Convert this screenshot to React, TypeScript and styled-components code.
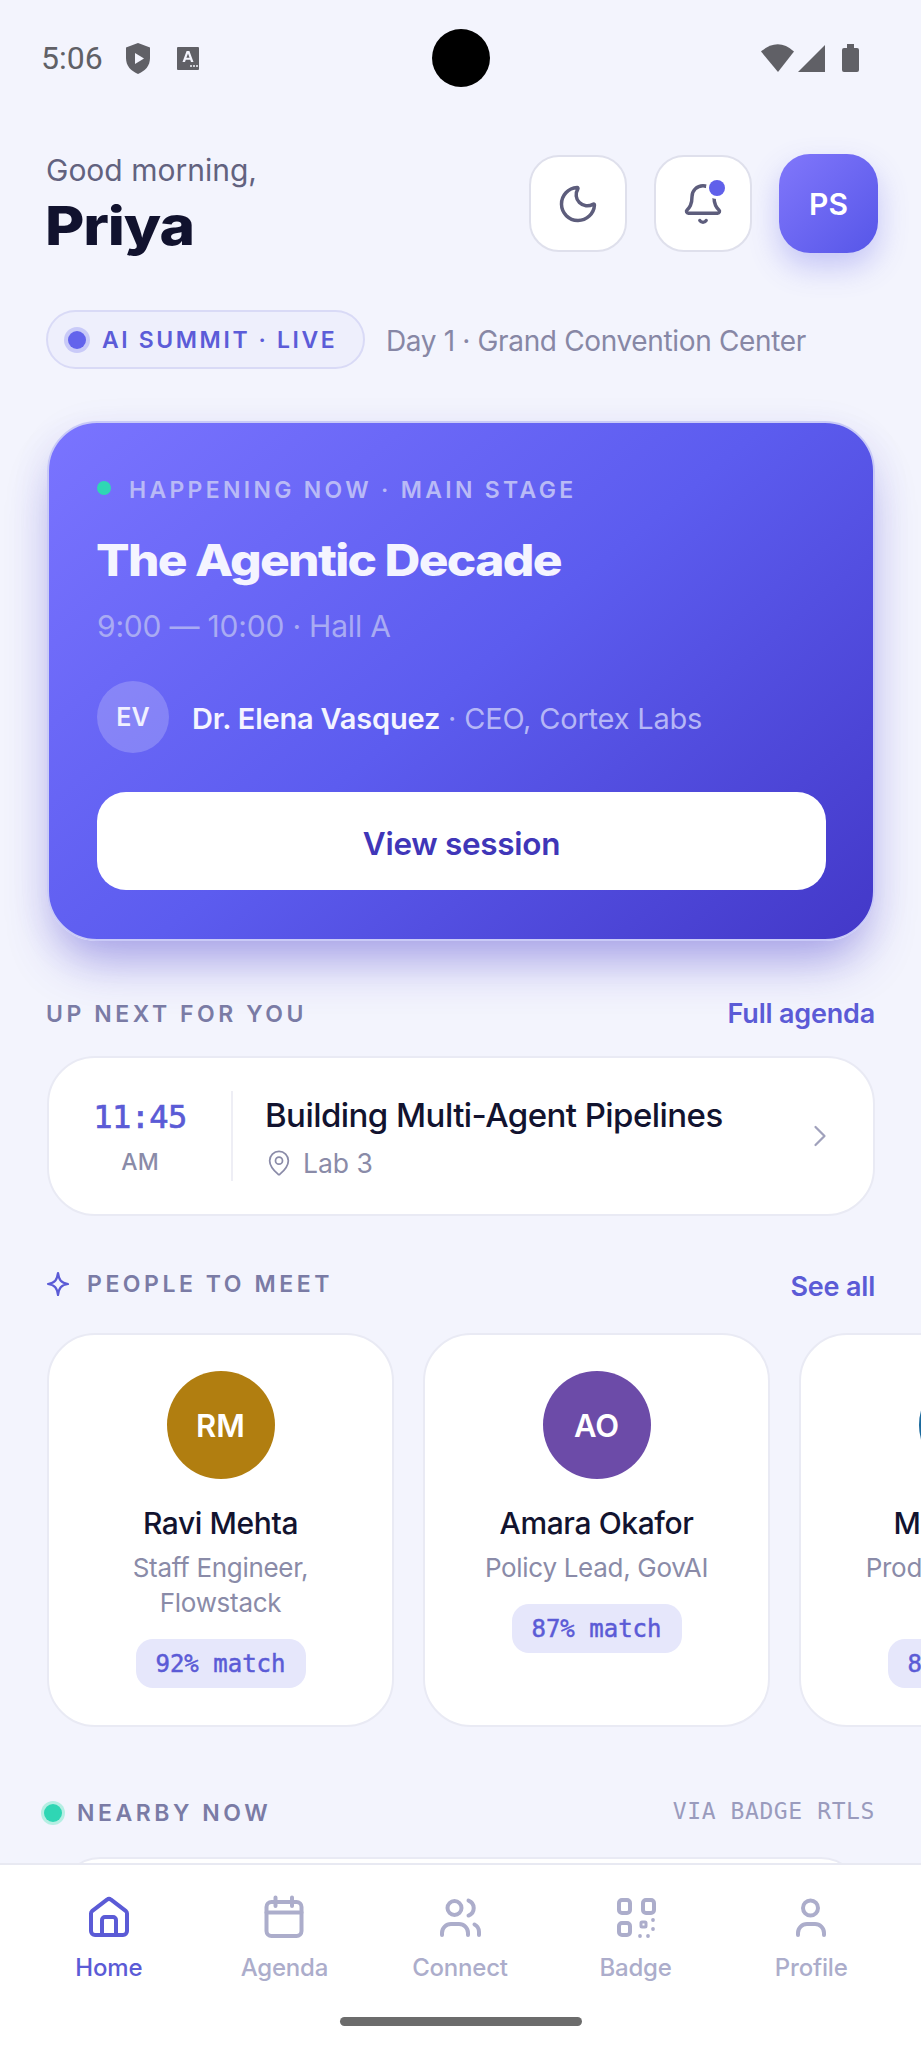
import React from "react";
import styled, { createGlobalStyle } from "styled-components";
import { Bell, ChevronRight, MapPin, Moon } from "lucide-react";

const Global = createGlobalStyle`
  html, body { margin: 0; padding: 0; background: #f3f4fd; }
  * { box-sizing: border-box; }
  body { font-family: Inter, "Liberation Sans", sans-serif; }
`;

const SANS = `Inter, "Liberation Sans", sans-serif`;
const MONO = `"DejaVu Sans Mono", "Liberation Mono", monospace`;

const Screen = styled.div`
  position: relative;
  width: 921px;
  height: 2048px;
  overflow: hidden;
  background: #f3f4fd;
`;

const StatusBar = styled.div`
  display: grid;
  grid-template-columns: 1fr 58px 1fr;
  align-items: center;
  height: 87px;
  padding: 29px 42px 0;
`;
const StatusLeft = styled.div`
  display: flex;
  align-items: center;
`;
const Clock = styled.span`
  font: 400 32px Roboto, sans-serif;
  color: #606066;
  width: 84px;
  margin-left: -1px;
  margin-right: 1px;
`;
const Camera = styled.div`
  width: 58px;
  height: 58px;
  border-radius: 50%;
  background: #000;
`;
const StatusRight = styled.div`
  display: flex;
  align-items: center;
  justify-content: flex-end;
  margin-right: 19px;
`;
const InputGlyph = styled.svg`
  margin-left: 27px;
`;

const Body = styled.div`
  padding: 67px 46px 0;
`;

const Header = styled.header`
  display: flex;
  justify-content: space-between;
  align-items: flex-start;
  height: 99px;
  margin-right: -3px;
`;
const Greeting = styled.div`
  font: 400 30px/36px ${SANS};
  color: #62627f;
  margin-top: -2px;
`;
const Name = styled.div`
  font: 800 54px/62px ${SANS};
  color: #11122e;
  margin: 7px 0 0 -1px;
  letter-spacing: -1px;
  transform: scaleX(1.12);
  transform-origin: left center;
`;
const HeaderActions = styled.div`
  display: flex;
  gap: 27px;
  align-items: center;
`;
const IconButton = styled.div`
  position: relative;
  width: 98px;
  height: 97px;
  border: 2px solid #dfe0ec;
  border-radius: 30px;
  background: #fff;
  display: flex;
  align-items: center;
  justify-content: center;
  color: #5d5d7c;
`;
const BellDot = styled.span`
  position: absolute;
  top: 23px;
  right: 25px;
  width: 16px;
  height: 16px;
  border-radius: 50%;
  background: #6060ea;
  box-shadow: 0 0 0 3px #fff;
`;
const Avatar = styled.div`
  width: 99px;
  height: 99px;
  border-radius: 31px;
  background: linear-gradient(135deg, #8177fb, #5656e8);
  box-shadow: 0 14px 30px rgba(91, 91, 232, 0.3);
  color: #fff;
  font: 600 30px ${SANS};
  display: flex;
  align-items: center;
  justify-content: center;
`;

const EventLine = styled.div`
  display: flex;
  align-items: center;
  gap: 21px;
  margin-top: 57px;
`;
const LiveChip = styled.div`
  display: flex;
  align-items: center;
  gap: 16px;
  height: 59px;
  width: 319px;
  padding: 1px 0 0 20px;
  border: 2px solid #d9daf6;
  border-radius: 30px;
  background: #eeeffc;
  color: #5c5cd8;
  font: 600 23px ${SANS};
  letter-spacing: 2.6px;
  white-space: nowrap;
`;
const LiveDot = styled.span<{ $color: string; $halo: string }>`
  flex: none;
  width: 18px;
  height: 18px;
  border-radius: 50%;
  background: ${(p) => p.$color};
  box-shadow: 0 0 0 4px ${(p) => p.$halo};
`;
const EventPlace = styled.span`
  padding-top: 2px;
  font: 400 28px ${SANS};
  color: #8787a5;
  letter-spacing: -0.35px;
  white-space: nowrap;
`;

const Hero = styled.section`
  margin: 52px 0 0 1px;
  height: 520px;
  padding: 52px 48px 0;
  border-radius: 50px;
  border: 2px solid #c9caf7;
  background: linear-gradient(140deg, #7a74ff 0%, #5c5cef 50%, #4338c8 100%);
  box-shadow: 0 30px 50px -12px rgba(67, 56, 202, 0.42), 0 10px 40px rgba(67, 56, 202, 0.08);
`;
const HeroKicker = styled.div`
  display: flex;
  align-items: center;
  gap: 18px;
  height: 30px;
  font: 600 23px ${SANS};
  letter-spacing: 3.3px;
  color: #b9baf6;
  white-space: nowrap;
`;
const KickerDot = styled.span`
  width: 14px;
  height: 14px;
  border-radius: 50%;
  background: #2fd6b4;
  margin-top: -4px;
`;
const HeroTitle = styled.h2`
  margin: 27px 0 0 -1px;
  font: 800 44px/56px ${SANS};
  letter-spacing: -1.5px;
  color: #f4f4ff;
  white-space: nowrap;
  transform: scaleX(1.128);
  transform-origin: left center;
`;
const HeroTime = styled.div`
  margin-top: 18px;
  font: 400 30px/40px ${SANS};
  color: #a9abf3;
  letter-spacing: -0.2px;
`;
const Speaker = styled.div`
  display: flex;
  align-items: center;
  gap: 23px;
  margin-top: 35px;
`;
const SpeakerAvatar = styled.div`
  width: 72px;
  height: 72px;
  border-radius: 50%;
  background: rgba(255, 255, 255, 0.2);
  color: #f0f0ff;
  font: 600 25px ${SANS};
  display: flex;
  align-items: center;
  justify-content: center;
`;
const SpeakerText = styled.div`
  padding-top: 2px;
  font: 400 29px ${SANS};
  color: #b5b6f6;
  letter-spacing: -0.2px;
  white-space: nowrap;
  strong { font-weight: 600; color: #f4f4ff; }
`;
const HeroButton = styled.div`
  margin-top: 39px;
  height: 98px;
  width: 729px;
  padding-top: 4px;
  border-radius: 29px;
  background: #fff;
  color: #4036b8;
  font: 600 31.5px ${SANS};
  letter-spacing: -0.3px;
  display: flex;
  align-items: center;
  justify-content: center;
`;

const SectionHead = styled.div<{ $top: number; $bottom: number }>`
  display: flex;
  align-items: center;
  justify-content: space-between;
  height: 34px;
  margin-top: ${(p) => p.$top}px;
  margin-bottom: ${(p) => p.$bottom}px;
`;
const SectionTitle = styled.div`
  display: flex;
  align-items: center;
  font: 600 23px ${SANS};
  letter-spacing: 3.55px;
  color: #7a7ba5;
  white-space: nowrap;
`;
const SectionLink = styled.span<{ $nudge: number }>`
  margin-top: ${(p) => p.$nudge}px;
  font: 600 27px ${SANS};
  letter-spacing: -0.2px;
  color: #5b5bd6;
`;
const SparkIcon = styled.svg`
  width: 24px;
  height: 26px;
  margin-right: 17px;
`;
const NearbyDot = styled.span`
  flex: none;
  width: 18px;
  height: 18px;
  border-radius: 50%;
  background: #2fd6b4;
  box-shadow: 0 0 0 3px #b5eee3;
  margin: 0 15px 0 -2px;
`;
const ViaLabel = styled.span`
  font: 400 23px ${MONO};
  letter-spacing: 0.6px;
  color: #9a9bbd;
  white-space: nowrap;
  margin-top: -4px;
`;

const SessionRow = styled.div`
  display: flex;
  align-items: center;
  height: 160px;
  margin-left: 1px;
  border: 2px solid #e9eaf4;
  border-radius: 48px;
  background: #fff;
`;
const TimeCol = styled.div`
  flex: none;
  width: 184px;
  height: 90px;
  padding-top: 4px;
  border-right: 2px solid #eeeef5;
  display: flex;
  flex-direction: column;
  align-items: center;
  justify-content: center;
  gap: 14px;
`;
const TimeValue = styled.div`
  font: 400 32px/34px ${MONO};
  -webkit-text-stroke: 0.7px #5b5bd6;
  color: #5b5bd6;
  letter-spacing: -0.6px;
`;
const TimeSuffix = styled.div`
  font: 500 23px/28px ${SANS};
  color: #8a8ba8;
`;
const SessionInfo = styled.div`
  flex: 1;
  padding: 3px 0 0 32px;
`;
const SessionTitle = styled.div`
  font: 500 33px/42px ${SANS};
  color: #12132f;
  letter-spacing: -0.55px;
  white-space: nowrap;
`;
const SessionPlace = styled.div`
  display: flex;
  align-items: center;
  gap: 10px;
  margin-top: 9px;
  font: 400 26.5px/36px ${SANS};
  color: #8a8ba8;
`;
const RowChevron = styled.div`
  flex: none;
  color: #a0a1bc;
  display: flex;
  margin-right: 35px;
`;

const PeopleRail = styled.div`
  display: flex;
  gap: 29px;
  margin-left: 1px;
  width: 1200px;
`;
const PersonCard = styled.div`
  flex: none;
  width: 347px;
  height: 394px;
  padding: 36px 33px 0;
  border: 2px solid #e9eaf4;
  border-radius: 48px;
  background: #fff;
  display: flex;
  flex-direction: column;
  align-items: center;
  text-align: center;
`;
const PersonAvatar = styled.div<{ $bg: string }>`
  flex: none;
  width: 108px;
  height: 108px;
  border-radius: 50%;
  background: ${(p) => p.$bg};
  color: #fff;
  font: 600 31px ${SANS};
  display: flex;
  align-items: center;
  justify-content: center;
`;
const PersonName = styled.div`
  margin-top: 24px;
  font: 500 30px/40px ${SANS};
  color: #12132f;
  letter-spacing: -0.4px;
  white-space: nowrap;
`;
const PersonRole = styled.div`
  margin-top: 7px;
  font: 400 26px/35px ${SANS};
  color: #8a8ba8;
  letter-spacing: -0.3px;
`;
const MatchBadge = styled.div`
  margin-top: 19px;
  height: 49px;
  width: 170px;
  flex: none;
  border-radius: 17px;
  background: #e6e7fb;
  color: #5b5bd6;
  font: 400 24px ${MONO};
  -webkit-text-stroke: 0.5px #5b5bd6;
  display: flex;
  align-items: center;
  justify-content: center;
  white-space: nowrap;
`;

const NearbyCard = styled.div`
  height: 120px;
  margin: 0 14px;
  border: 2px solid #e9eaf4;
  border-radius: 40px;
  background: #fff;
`;

const TabBar = styled.nav`
  position: absolute;
  left: 0;
  right: 0;
  bottom: 0;
  height: 185px;
  border-top: 2px solid #e8e9f2;
  background: #fff;
  padding: 0 22px 0 21px;
  display: grid;
  grid-template-columns: repeat(5, 1fr);
`;
const Tab = styled.div<{ $active?: boolean }>`
  display: flex;
  flex-direction: column;
  align-items: center;
  padding-top: 30px;
  color: ${(p) => (p.$active ? "#5b5bd6" : "#acadcb")};
  font: 500 24px/30px ${SANS};
  letter-spacing: -0.2px;
  span { margin-top: 14px; }
`;
const TabIcon = styled.svg`
  width: 44px;
  height: 44px;
  fill: none;
  stroke: currentColor;
  stroke-width: 4;
  stroke-linecap: round;
  stroke-linejoin: round;
`;
const HomeBar = styled.div`
  position: absolute;
  left: 340px;
  bottom: 22px;
  width: 242px;
  height: 9px;
  border-radius: 5px;
  background: #6c6c6c;
`;

const people = [
  { initials: "RM", bg: "#b17e10", name: "Ravi Mehta", role: "Staff Engineer, Flowstack", match: "92% match" },
  { initials: "AO", bg: "#6c4ba8", name: "Amara Okafor", role: "Policy Lead, GovAI", match: "87% match" },
  { initials: "MC", bg: "#1b6a9e", name: "Maya Chen", role: "Product Manager, Arcline", match: "81% match" },
];

const tabs = [
  {
    label: "Home",
    active: true,
    art: (
      <>
        <path d="M4 18.500a3 3 0 0 1 1-2.300L20 4.700a3 3 0 0 1 4 0L39 16.200a3 3 0 0 1 1 2.300V36a4 4 0 0 1-4 4H8a4 4 0 0 1-4-4Z" />
        <path d="M15 40V25a3 3 0 0 1 3-3h8a3 3 0 0 1 3 3v15" />
      </>
    ),
  },
  {
    label: "Agenda",
    art: (
      <>
        <rect x="4.500" y="7" width="35" height="34" rx="5" />
        <path d="M13.500 2.500V11M30 2.500V11M4.500 17.500h35" />
      </>
    ),
  },
  {
    label: "Connect",
    art: (
      <>
        <circle cx="16.500" cy="13" r="7" />
        <path d="M30.500 5.500a8 8 0 0 1 0 15" />
        <path d="M4 40v-2a9 9 0 0 1 9-9h8a9 9 0 0 1 9 9v2" />
        <path d="M36.500 29.500c3 1.500 4.500 4 4.500 7.500v3" />
      </>
    ),
  },
  {
    label: "Badge",
    art: (
      <>
        <rect x="5" y="5" width="11" height="13" rx="3" />
        <rect x="29" y="5" width="11" height="13" rx="3" />
        <rect x="5" y="28" width="11" height="12" rx="3" />
        <rect x="27" y="27" width="5" height="5" rx="1" strokeWidth="3" />
        <g fill="currentColor" stroke="none">
          <circle cx="39" cy="25" r="1.900" />
          <circle cx="39" cy="34" r="1.900" />
          <circle cx="26" cy="41" r="1.900" />
          <circle cx="34" cy="41" r="1.900" />
        </g>
      </>
    ),
  },
  {
    label: "Profile",
    art: (
      <>
        <circle cx="21.500" cy="13" r="7.500" />
        <path d="M9 40v-2a9 9 0 0 1 9-9h8a9 9 0 0 1 9 9v2" />
      </>
    ),
  },
];

export default function App() {
  return (
    <Screen>
      <Global />
      <StatusBar>
        <StatusLeft>
          <Clock>5:06</Clock>
          <svg width="24" height="31" viewBox="0 0 24 31">
            <path d="M12 0 24 4.500V15c0 8-5 13-12 16C5 28 0 23 0 15V4.500Z" fill="#606066" />
            <path d="M9 10l9 5.500-9 5.500Z" fill="#f3f4fd" />
          </svg>
          <InputGlyph width="22" height="23" viewBox="0 0 22 23">
            <path d="M1 0h20a1 1 0 0 1 1 1v21a1 1 0 0 1-1 1H1a1 1 0 0 1-1-1V1a1 1 0 0 1 1-1Z" fill="#606066" />
            <path d="M5.500 15 9.600 4h2.800l4.100 11h-2.500l-.8-2.300H8.800L8 15Zm3.900-4.200h3.200L11 6.500Z" fill="#f3f4fd" />
            <circle cx="14" cy="19" r="1" fill="#f3f4fd" />
            <circle cx="17" cy="19" r="1" fill="#f3f4fd" />
            <circle cx="20" cy="19" r="1" fill="#f3f4fd" />
          </InputGlyph>
        </StatusLeft>
        <Camera />
        <StatusRight>
          <svg width="100" height="29" viewBox="0 0 100 29">
            <path d="M1 7.500Q18-7 34 7.500L18 28Z" fill="#606066" />
            <path d="M38 28 65 1v27Z" fill="#606066" />
            <path d="M82 6a2 2 0 0 1 2-2h3V0h7v4h3a2 2 0 0 1 2 2v20a2 2 0 0 1-2 2H84a2 2 0 0 1-2-2Z" fill="#606066" />
          </svg>
        </StatusRight>
      </StatusBar>

      <Body>
        <Header>
          <div>
            <Greeting>Good morning,</Greeting>
            <Name>Priya</Name>
          </div>
          <HeaderActions>
            <IconButton><Moon size={44} strokeWidth={1.9} /></IconButton>
            <IconButton>
              <Bell size={44} strokeWidth={1.9} />
              <BellDot />
            </IconButton>
            <Avatar>PS</Avatar>
          </HeaderActions>
        </Header>

        <EventLine>
          <LiveChip>
            <LiveDot $color="#6363ec" $halo="#c9caf8" />
            AI SUMMIT · LIVE
          </LiveChip>
          <EventPlace>Day 1 · Grand Convention Center</EventPlace>
        </EventLine>

        <Hero>
          <HeroKicker><KickerDot />HAPPENING NOW · MAIN STAGE</HeroKicker>
          <HeroTitle>The Agentic Decade</HeroTitle>
          <HeroTime>9:00 — 10:00 · Hall A</HeroTime>
          <Speaker>
            <SpeakerAvatar>EV</SpeakerAvatar>
            <SpeakerText><strong>Dr. Elena Vasquez</strong> · CEO, Cortex Labs</SpeakerText>
          </Speaker>
          <HeroButton>View session</HeroButton>
        </Hero>

        <SectionHead $top={56} $bottom={25}>
          <SectionTitle>UP NEXT FOR YOU</SectionTitle>
          <SectionLink $nudge={-2}>Full agenda</SectionLink>
        </SectionHead>
        <SessionRow>
          <TimeCol>
            <TimeValue>11:45</TimeValue>
            <TimeSuffix>AM</TimeSuffix>
          </TimeCol>
          <SessionInfo>
            <SessionTitle>Building Multi-Agent Pipelines</SessionTitle>
            <SessionPlace><MapPin size={28} strokeWidth={1.5} />Lab 3</SessionPlace>
          </SessionInfo>
          <RowChevron><ChevronRight size={36} strokeWidth={1.5} /></RowChevron>
        </SessionRow>

        <SectionHead $top={51} $bottom={32}>
          <SectionTitle>
            <SparkIcon viewBox="0 0 24 26" fill="none" stroke="#5b5bd6" strokeWidth="2.200" strokeLinejoin="round">
              <path d="M12 2c1 7 3 10 10 11-7 1-9 4-10 11C11 17 9 14 2 13c7-1 9-4 10-11Z" />
            </SparkIcon>
            PEOPLE TO MEET
          </SectionTitle>
          <SectionLink $nudge={4}>See all</SectionLink>
        </SectionHead>
        <PeopleRail>
          {people.map((p) => (
            <PersonCard key={p.initials}>
              <PersonAvatar $bg={p.bg}>{p.initials}</PersonAvatar>
              <PersonName>{p.name}</PersonName>
              <PersonRole>{p.role}</PersonRole>
              <MatchBadge>{p.match}</MatchBadge>
            </PersonCard>
          ))}
        </PeopleRail>

        <SectionHead $top={69} $bottom={27}>
          <SectionTitle><NearbyDot />NEARBY NOW</SectionTitle>
          <ViaLabel>VIA BADGE RTLS</ViaLabel>
        </SectionHead>
        <NearbyCard />
      </Body>

      <TabBar>
        {tabs.map(({ label, art, active }) => (
          <Tab key={label} $active={active}>
            <TabIcon viewBox="0 0 44 44">{art}</TabIcon>
            <span>{label}</span>
          </Tab>
        ))}
        <HomeBar />
      </TabBar>
    </Screen>
  );
}
